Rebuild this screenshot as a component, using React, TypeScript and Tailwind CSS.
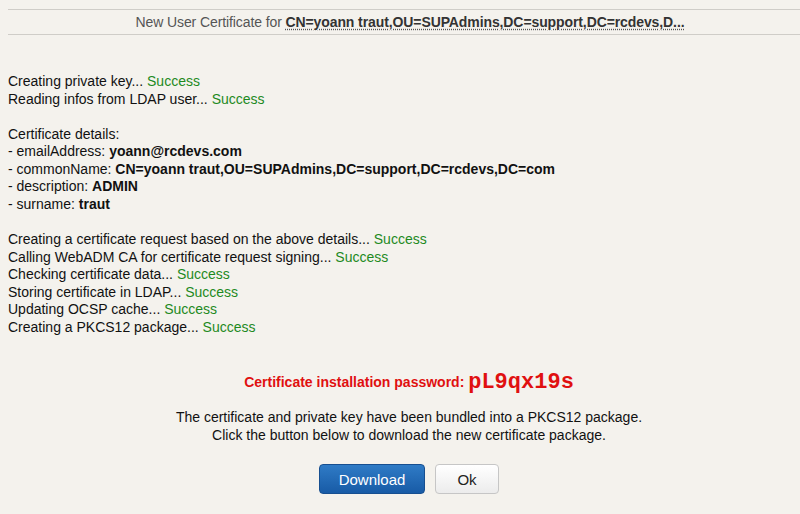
import React from "react";

const S = () => <span className="text-[#1e8a1e]">Success</span>;

export default function App() {
  return (
    <div
      className="w-[800px] h-[514px] overflow-hidden bg-[#f4f2ed] text-[#111] text-[14px]"
      style={{ fontFamily: '"Liberation Sans", Arial, sans-serif' }}
    >
      <div className="pt-[9px] pl-[8px]">
        <div className="border-t border-b border-[#cfcdc8] h-[26px] flex items-center justify-center pl-[12px] text-[14px] text-[#555] tracking-[-0.1px]">
          <span>New User Certificate for&nbsp;</span>
          <span className="font-bold text-[#333] underline decoration-dotted decoration-[#555] underline-offset-2">
            CN=yoann traut,OU=SUPAdmins,DC=support,DC=rcdevs,D...
          </span>
        </div>
      </div>

      <div className="pl-[8px] pt-[38px] leading-[17.57px]">
        <div>Creating private key... <S /></div>
        <div>Reading infos from LDAP user... <S /></div>
        <div className="h-[17.57px]" />
        <div>Certificate details:</div>
        <div>- emailAddress: <b>yoann@rcdevs.com</b></div>
        <div>- commonName: <b>CN=yoann traut,OU=SUPAdmins,DC=support,DC=rcdevs,DC=com</b></div>
        <div>- description: <b>ADMIN</b></div>
        <div>- surname: <b>traut</b></div>
        <div className="h-[17.57px]" />
        <div>Creating a certificate request based on the above details... <S /></div>
        <div>Calling WebADM CA for certificate request signing... <S /></div>
        <div>Checking certificate data... <S /></div>
        <div>Storing certificate in LDAP... <S /></div>
        <div>Updating OCSP cache... <S /></div>
        <div>Creating a PKCS12 package... <S /></div>

        <div className="pl-[10px] flex flex-col items-center">
          <div className="mt-[34px] h-[24px] flex items-center text-[#e01010] font-bold">
            <span>Certificate installation password:&nbsp;</span>
            <span
              className="text-[22px] font-bold"
              style={{ fontFamily: '"Liberation Mono", "Courier New", monospace' }}
            >
              pL9qx19s
            </span>
          </div>
          <div className="mt-[14px] text-center leading-[18px]">
            <div>The certificate and private key have been bundled into a PKCS12 package.</div>
            <div>Click the button below to download the new certificate package.</div>
          </div>
          <div className="mt-[20px] flex gap-[10px]">
            <button className="w-[106px] h-[30px] rounded-[4px] border border-[#174f90] bg-gradient-to-b from-[#2f7bc6] to-[#185ba6] text-white text-[15px]">
              Download
            </button>
            <button className="w-[64px] h-[30px] rounded-[4px] border border-[#c6c6c6] bg-gradient-to-b from-[#ffffff] to-[#ececec] text-[#222] text-[15px]">
              Ok
            </button>
          </div>
        </div>
      </div>
    </div>
  );
}
